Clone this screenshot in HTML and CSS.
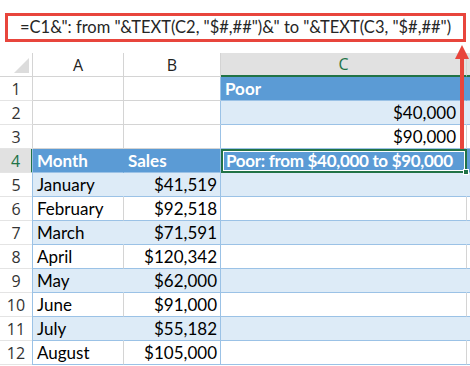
FILE: index.html
```html
<!DOCTYPE html>
<html lang="en">
<head>
    <meta charset="UTF-8">
    <title>Poor range label</title>
    <link rel="stylesheet" href="styles.css">
</head>
<body>
    <div class="page">
        <div class="formula">=C1&amp;": from "&amp;TEXT(C2, "$#,##")&amp;" to "&amp;TEXT(C3, "$#,##")</div>

        <div class="sheet">
            <!-- column headers -->
            <div class="corner"><span class="corner-mark"></span></div>
            <div class="ch">A</div>
            <div class="ch">B</div>
            <div class="ch ch-active">C</div>
            <div class="ch ch-stub"></div>

            <div class="rh">1</div>
            <div class="cell"></div>
            <div class="cell cell-b"></div>
            <div class="cell hd">Poor</div>
            <div class="cell hd stub"></div>

            <div class="rh">2</div>
            <div class="cell"></div>
            <div class="cell cell-b"></div>
            <div class="cell band num num-c">$40,000</div>
            <div class="cell band stub"></div>

            <div class="rh">3</div>
            <div class="cell"></div>
            <div class="cell cell-b"></div>
            <div class="cell plain num num-c">$90,000</div>
            <div class="cell plain stub"></div>

            <div class="rh rh-active">4</div>
            <div class="cell hd first">Month</div>
            <div class="cell hd cell-b">Sales</div>
            <div class="cell hd selected">Poor: from $40,000 to $90,000<span class="fill-handle"></span></div>
            <div class="cell hd stub"></div>

            <div class="rh">5</div>
            <div class="cell band first">January</div>
            <div class="cell band cell-b num">$41,519</div>
            <div class="cell band"></div>
            <div class="cell band stub"></div>

            <div class="rh">6</div>
            <div class="cell plain first">February</div>
            <div class="cell plain cell-b num">$92,518</div>
            <div class="cell plain"></div>
            <div class="cell plain stub"></div>

            <div class="rh">7</div>
            <div class="cell band first">March</div>
            <div class="cell band cell-b num">$71,591</div>
            <div class="cell band"></div>
            <div class="cell band stub"></div>

            <div class="rh">8</div>
            <div class="cell plain first">April</div>
            <div class="cell plain cell-b num">$120,342</div>
            <div class="cell plain"></div>
            <div class="cell plain stub"></div>

            <div class="rh">9</div>
            <div class="cell band first">May</div>
            <div class="cell band cell-b num">$62,000</div>
            <div class="cell band"></div>
            <div class="cell band stub"></div>

            <div class="rh">10</div>
            <div class="cell plain first">June</div>
            <div class="cell plain cell-b num">$91,000</div>
            <div class="cell plain"></div>
            <div class="cell plain stub"></div>

            <div class="rh">11</div>
            <div class="cell band first">July</div>
            <div class="cell band cell-b num">$55,182</div>
            <div class="cell band"></div>
            <div class="cell band stub"></div>

            <div class="rh">12</div>
            <div class="cell plain first">August</div>
            <div class="cell plain cell-b num">$105,000</div>
            <div class="cell plain"></div>
            <div class="cell plain stub"></div>
        </div>

        <!-- red pointer from the selected cell up to the formula -->
        <svg class="arrow" width="16" height="104" viewBox="0 0 16 104">
            <polygon points="8,0 15,14 1,14" fill="#e8453c"/>
            <rect x="6" y="12" width="4" height="92" fill="#e8453c"/>
        </svg>
    </div>
</body>
</html>
```

FILE: styles.css
```css
* {
    box-sizing: border-box;
}
body {
    margin: 0;
    background-color: #ffffff;
    font-family: Lato, "Liberation Sans", sans-serif;
    color: #000000;
}
.page {
    position: relative;
    width: 470px;
    height: 366px;
    overflow: hidden;
}
.formula {
    margin: 13px 4px 11px 5px;
    height: 29px;
    border: 3px solid #e8453c;
    padding-left: 12px;
    font-size: 16.5px;
    line-height: 22px;
    color: #262626;
    white-space: nowrap;
}
.sheet {
    display: grid;
    grid-template-columns: 33px 91px 97px 246px 3px;
    grid-auto-rows: 24px;
}
.corner {
    position: relative;
    border-right: 1px solid #d4d4d4;
    border-bottom: 1px solid #d4d4d4;
}
.corner-mark {
    position: absolute;
    right: 3px;
    bottom: 3px;
    width: 0;
    height: 0;
    border-left: 15px solid transparent;
    border-bottom: 15px solid #dcdcdc;
}
.ch {
    display: flex;
    align-items: center;
    justify-content: center;
    font-family: "Open Sans", sans-serif;
    font-size: 16px;
    color: #222222;
    border-right: 1px solid #d4d4d4;
    border-bottom: 1px solid #d4d4d4;
}
.ch-active {
    background-color: #e1e1e1;
    color: #217346;
    border-bottom: 2px solid #217346;
}
.ch-stub {
    background-color: #e1e1e1;
    border-right: none;
    border-bottom: 2px solid #217346;
}
.rh {
    display: flex;
    align-items: center;
    justify-content: center;
    font-family: "Open Sans", sans-serif;
    font-size: 16px;
    color: #333333;
    border-right: 1px solid #d4d4d4;
    border-bottom: 1px solid #e4e4e4;
}
.rh-active {
    background-color: #e1e1e1;
    color: #217346;
    border-right: 2px solid #217346;
}
.cell {
    display: flex;
    align-items: flex-end;
    padding: 0 3px 1px 4px;
    font-size: 17px;
    line-height: 20px;
    white-space: nowrap;
    border-right: 1px solid #d4d4d4;
    border-bottom: 1px solid #d4d4d4;
}
.cell-b {
    border-right-color: #9bc2e6;
}
.first {
    border-left: 1px solid #9bc2e6;
    margin-left: -1px;
}
.hd {
    background-color: #5b9bd5;
    color: #ffffff;
    font-weight: bold;
    border-right-color: #5b9bd5;
    border-bottom-color: #9bc2e6;
}
.band {
    background-color: #ddebf7;
    border-right-color: #ddebf7;
    border-bottom-color: #9bc2e6;
}
.plain {
    background-color: #ffffff;
    border-bottom-color: #9bc2e6;
}
.band.cell-b,
.plain.cell-b,
.hd.cell-b {
    border-right-color: #9bc2e6;
}
.stub {
    border-right: none;
}
.num {
    justify-content: flex-end;
}
.num-c {
    padding-right: 10px;
}
.selected {
    position: relative;
    border: 2px solid #217346;
    box-shadow: inset 0 0 0 1px #ffffff;
    padding-left: 3px;
    padding-bottom: 0;
    letter-spacing: -0.3px;
}
.fill-handle {
    position: absolute;
    right: -4px;
    bottom: -4px;
    width: 6px;
    height: 6px;
    background-color: #217346;
    border: 1px solid #ffffff;
}
.arrow {
    position: absolute;
    left: 454px;
    top: 45px;
}
```
